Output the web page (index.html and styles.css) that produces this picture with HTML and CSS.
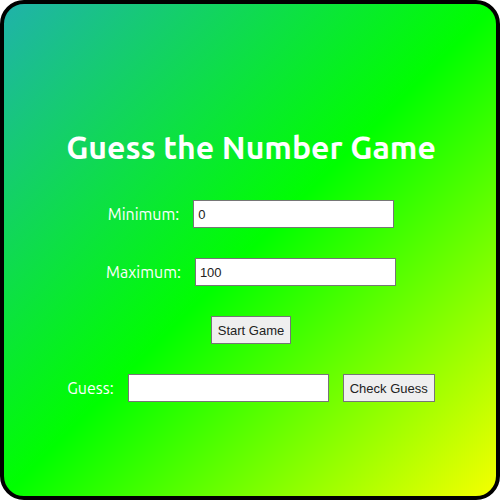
FILE: index.html
```html
<!DOCTYPE html>
<html lang="en">
<head>
<meta charset="utf-8">
<title>Guess the Number Game</title>
<link rel="stylesheet" href="styles.css">
</head>
<body>
<main class="game">
  <h1 class="title">Guess the Number Game</h1>
  <div class="row">
    <label for="min">Minimum:</label>
    <input type="number" id="min" value="0">
  </div>
  <div class="row">
    <label for="max">Maximum:</label>
    <input type="number" id="max" value="100">
  </div>
  <div class="row">
    <button type="button">Start Game</button>
  </div>
  <div class="row">
    <label for="guess">Guess:</label>
    <input type="number" id="guess">
    <button type="button">Check Guess</button>
  </div>
</main>
</body>
</html>
```
FILE: styles.css
```css
* {
  box-sizing: border-box;
}

body {
  margin: 0;
  background: #fff;
  color: #fff;
  font-family: Ubuntu, "Noto Sans", sans-serif;
  font-size: 16px;
}

.game {
  display: flex;
  flex-direction: column;
  align-items: center;
  justify-content: center;
  gap: 30px;
  min-height: 100vh;
  padding: 31px 0 0 2px;
  border: 4px solid #000;
  border-radius: 24px;
  background: linear-gradient(135deg, #20b2aa, #0f0 50%, #ff0 102%);
}

.title {
  margin: 0 0 5px;
  font-size: 32px;
  font-weight: 700;
  line-height: 36px;
}

.row {
  display: flex;
  align-items: center;
  gap: 14px;
}

input,
button {
  height: 28px;
  border: 1px solid #767676;
  border-radius: 0;
  color: #222;
  font-family: "Liberation Sans", sans-serif;
  font-size: 13px;
}

input {
  width: 201px;
  padding: 0 4px;
  background: #fff;
}

button {
  padding: 0 6px;
  background: #efefef;
}
```
